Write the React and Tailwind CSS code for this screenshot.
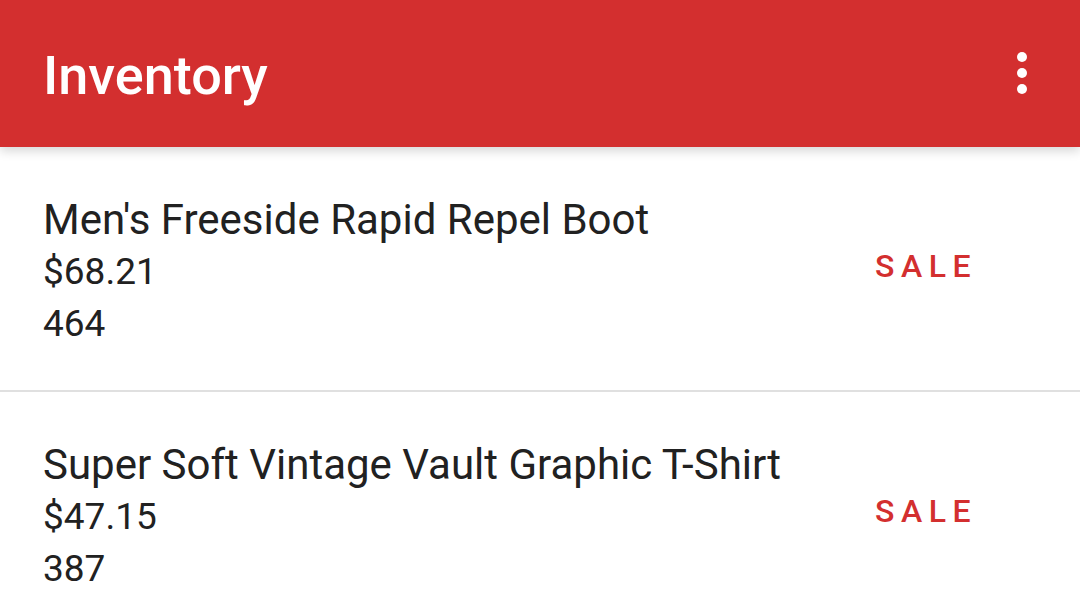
const items = [
  { name: "Men's Freeside Rapid Repel Boot", price: "$68.21", qty: "464" },
  { name: "Super Soft Vintage Vault Graphic T-Shirt", price: "$47.15", qty: "387" },
];

function Kebab() {
  return (
    <svg width="12" height="44" viewBox="0 0 12 44" className="block">
      <circle cx="6" cy="6" r="5" fill="#fff" />
      <circle cx="6" cy="22" r="5" fill="#fff" />
      <circle cx="6" cy="38" r="5" fill="#fff" />
    </svg>
  );
}

export default function App() {
  return (
    <div
      className="w-[1080px] h-[608px] overflow-hidden bg-white"
      style={{ fontFamily: "Roboto, 'Liberation Sans', sans-serif" }}
    >
      <header className="h-[147px] bg-[#d32f2f] flex items-start justify-between pl-[43px] pr-[52px] relative z-10 shadow-[0_4px_10px_rgba(0,0,0,0.16)]">
        <h1 className="text-white text-[54px] font-medium leading-none mt-[49px]">Inventory</h1>
        <div className="mt-[51px]">
          <Kebab />
        </div>
      </header>
      <ul>
        {items.map((item) => (
          <li
            key={item.name}
            className="h-[245px] border-b-2 border-[#e0e0e0] flex justify-between pl-[43px] pr-[103px]"
          >
            <div className="pt-[47px] text-[#212121] leading-[52px]">
              <div className="text-[42px]">{item.name}</div>
              <div className="text-[37px]">{item.price}</div>
              <div className="text-[37px]">{item.qty}</div>
            </div>
            <span className="self-center text-[#d32f2f] text-[32px] font-medium tracking-[6.5px] -mt-[5px]">
              SALE
            </span>
          </li>
        ))}
      </ul>
    </div>
  );
}
